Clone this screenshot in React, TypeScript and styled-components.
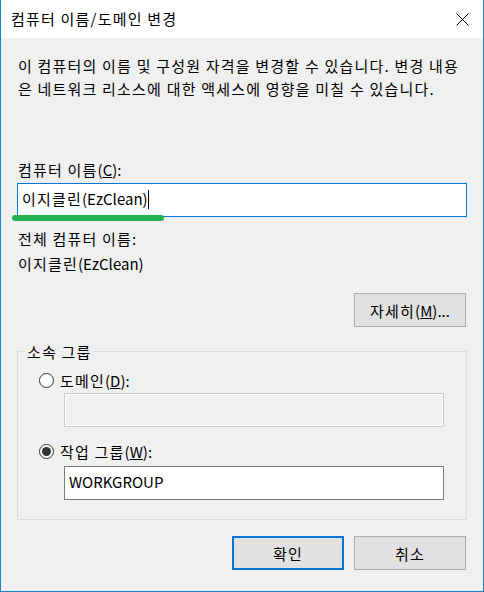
import React from 'react';
import styled, { createGlobalStyle } from 'styled-components';

const GlobalStyle = createGlobalStyle`
  html, body {
    margin: 0;
    padding: 0;
    background: #ffffff;
  }
  body {
    font-family: "Noto Sans CJK KR", "Noto Sans", sans-serif;
    font-size: 15px;
    letter-spacing: 1.2px;
    color: #000000;
  }
`;

// Latin runs keep their natural spacing; Hangul is spread to match Malgun Gothic
const Latin = styled.span`
  letter-spacing: 0;
`;

const Window = styled.div`
  box-sizing: border-box;
  width: 484px;
  height: 592px;
  display: flex;
  flex-direction: column;
  border: 1px solid #1a82d6;
  border-top: none;
  background: #f0f0f0;
`;

const TitleBar = styled.div`
  height: 38px;
  flex: none;
  display: flex;
  align-items: center;
  justify-content: space-between;
  background: #ffffff;
  padding: 0 14px 0 10px;
`;

const Title = styled.span`
  line-height: 23px;
  margin-top: -1px;
`;

const CloseButton = styled.button`
  border: none;
  background: transparent;
  padding: 0;
  width: 14px;
  height: 14px;
  display: flex;
  align-items: center;
  justify-content: center;
`;

const Body = styled.div`
  display: flex;
  flex-direction: column;
  padding: 16px 16px 0 16px;
`;

const Text = styled.div<{ $mt?: number }>`
  line-height: 23px;
  margin-top: ${(p) => p.$mt ?? 0}px;
  padding-left: 1px;
  white-space: nowrap;
`;

const Description = styled.div`
  line-height: 23px;
  padding-left: 1px;
  white-space: nowrap;
`;

const TextBox = styled.div<{ $focused?: boolean; $disabled?: boolean; $mt?: number }>`
  position: relative;
  box-sizing: border-box;
  height: 34px;
  margin-top: ${(p) => p.$mt ?? 0}px;
  padding: 0 4px;
  background: ${(p) => (p.$disabled ? '#f0f0f0' : '#ffffff')};
  border: 1px solid ${(p) => (p.$focused ? '#0078d7' : p.$disabled ? '#cccccc' : '#7a7a7a')};
  box-shadow: ${(p) => (p.$disabled ? 'inset 0 0 0 1px #ffffff' : 'none')};
  line-height: 30px;
  white-space: nowrap;
`;

const Caret = styled.span`
  display: inline-block;
  width: 1px;
  height: 19px;
  background: #000000;
  vertical-align: -4px;
`;

const Highlight = styled.span`
  position: absolute;
  left: -6px;
  top: 31px;
  width: 152px;
  height: 6px;
  border-radius: 3px;
  background: #22b14c;
`;

const ButtonRow = styled.div<{ $mt: number }>`
  display: flex;
  justify-content: flex-end;
  gap: 10px;
  margin-top: ${(p) => p.$mt}px;
  padding-right: 1px;
`;

const DialogButton = styled.button<{ $primary?: boolean }>`
  box-sizing: border-box;
  width: 112px;
  height: 34px;
  padding: 0;
  font-family: inherit;
  font-size: 15px;
  letter-spacing: 1.2px;
  color: #000000;
  background: #e1e1e1;
  border: ${(p) => (p.$primary ? '2px solid #0078d7' : '1px solid #adadad')};
  line-height: 23px;
`;

const GroupBox = styled.fieldset`
  margin: 13px 0 0 0;
  padding: 0;
  border: 1px solid #dcdcdc;
  min-width: 0;
`;

const Legend = styled.legend`
  margin-left: 7px;
  padding: 0 2px;
  line-height: 23px;
`;

const GroupContent = styled.div`
  padding: 0 22px 19px 21px;
`;

const RadioRow = styled.label<{ $mt: number }>`
  display: flex;
  align-items: center;
  gap: 6px;
  margin-top: ${(p) => p.$mt}px;
  line-height: 23px;
`;

const RadioCircle = styled.span<{ $checked?: boolean }>`
  box-sizing: border-box;
  width: 15px;
  height: 15px;
  border-radius: 50%;
  border: 1px solid #333333;
  background: #ffffff;
  display: flex;
  align-items: center;
  justify-content: center;
  &::after {
    content: '';
    width: 9px;
    height: 9px;
    border-radius: 50%;
    background: ${(p) => (p.$checked ? '#333333' : 'transparent')};
  }
`;

const Indented = styled.div`
  padding-left: 25px;
`;

export default function App() {
  return (
    <>
      <GlobalStyle />
      <Window>
        <TitleBar>
          <Title>컴퓨터 이름/도메인 변경</Title>
          <CloseButton aria-label="닫기">
            <svg width="13" height="13" viewBox="0 0 13 13">
              <path d="M0.5 0.5 L12.5 12.5 M12.5 0.5 L0.5 12.5" stroke="#000" strokeWidth="1" />
            </svg>
          </CloseButton>
        </TitleBar>
        <Body>
          <Description>
            이 컴퓨터의 이름 및 구성원 자격을 변경할 수 있습니다. 변경 내용
            <br />
            은 네트워크 리소스에 대한 액세스에 영향을 미칠 수 있습니다.
          </Description>

          <Text $mt={58}>
            컴퓨터 이름<Latin>(<u>C</u>):</Latin>
          </Text>
          <TextBox $focused $mt={2}>
            이지클린<Latin>(EzClean)</Latin>
            <Caret />
            <Highlight />
          </TextBox>

          <Text $mt={10}>전체 컴퓨터 이름:</Text>
          <Text $mt={2}>
            이지클린<Latin>(EzClean)</Latin>
          </Text>

          <ButtonRow $mt={18}>
            <DialogButton>
              자세히<Latin>(<u>M</u>)...</Latin>
            </DialogButton>
          </ButtonRow>

          <GroupBox>
            <Legend>소속 그룹</Legend>
            <GroupContent>
              <RadioRow $mt={6}>
                <RadioCircle />
                <span>
                  도메인<Latin>(<u>D</u>):</Latin>
                </span>
              </RadioRow>
              <Indented>
                <TextBox $disabled $mt={1} />
              </Indented>
              <RadioRow $mt={13}>
                <RadioCircle $checked />
                <span>
                  작업 그룹<Latin>(<u>W</u>):</Latin>
                </span>
              </RadioRow>
              <Indented>
                <TextBox $mt={3}>
                  <Latin>WORKGROUP</Latin>
                </TextBox>
              </Indented>
            </GroupContent>
          </GroupBox>

          <ButtonRow $mt={16}>
            <DialogButton $primary>확인</DialogButton>
            <DialogButton>취소</DialogButton>
          </ButtonRow>
        </Body>
      </Window>
    </>
  );
}
